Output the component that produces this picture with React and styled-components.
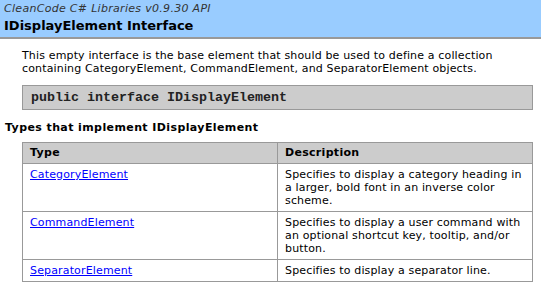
import React from 'react';
import styled, { createGlobalStyle } from 'styled-components';

const GlobalStyle = createGlobalStyle`
    body {
        margin: 0;
        background: #fff;
        font-family: "DejaVu Sans", Verdana, sans-serif;
        font-size: 11px;
        letter-spacing: 0.15px;
        color: #000;
    }
`

const rows = [
    { name: 'CategoryElement', desc: 'Specifies to display a category heading in a larger, bold font in an inverse color scheme.' },
    { name: 'CommandElement', desc: 'Specifies to display a user command with an optional shortcut key, tooltip, and/or button.' },
    { name: 'SeparatorElement', desc: 'Specifies to display a separator line.' },
]

const App = () => {
    return (
        <>
            <GlobalStyle />
            <Banner>
                <div className="product">CleanCode C# Libraries v0.9.30 API</div>
                <h1>IDisplayElement Interface</h1>
            </Banner>

            <Main>
                <Indent>
                    <p>This empty interface is the base element that should be used to define a collection containing CategoryElement, CommandElement, and SeparatorElement objects.</p>
                    <Code>public interface IDisplayElement</Code>
                </Indent>

                <Heading>Types that implement IDisplayElement</Heading>

                <Indent>
                    <Table>
                        <thead>
                            <tr>
                                <th>Type</th>
                                <th>Description</th>
                            </tr>
                        </thead>
                        <tbody>
                            {rows.map(r => (
                                <tr key={r.name}>
                                    <td><a href="#">{r.name}</a></td>
                                    <td>{r.desc}</td>
                                </tr>
                            ))}
                        </tbody>
                    </Table>
                </Indent>
            </Main>
        </>
    );
}

export default App;

const Banner = styled.div`
    background-color: #99ccff;
    border-bottom: 2px solid #999;
    padding: 1px 4px 2px;

    .product {
        font-style: italic;
        color: #333;
        line-height: 16px;
        letter-spacing: 0.3px;
    }
    h1 {
        margin: 0;
        font-size: 13px;
        font-weight: bold;
        line-height: 18px;
        letter-spacing: 0;
    }
`

const Main = styled.div`
    padding: 0 8px 0 5px;
`

const Indent = styled.div`
    margin-left: 17px;

    p {
        margin: 10px 0 0;
        line-height: 13px;
    }
`

const Code = styled.pre`
    margin: 10px 0 0;
    padding: 4px 8px;
    background-color: #ccc;
    border: 1px solid #999;
    font-family: "Courier New", "Liberation Mono", monospace;
    font-size: 13.33px;
    font-weight: bold;
    letter-spacing: 0;
    line-height: 15px;
    color: #222;
`

const Heading = styled.h4`
    margin: 11px 0 0;
    font-size: 11px;
    font-weight: bold;
    line-height: 14px;
    letter-spacing: 0.4px;
`

const Table = styled.table`
    margin-top: 7px;
    width: 100%;
    border-collapse: collapse;
    font-size: 11px;

    th, td {
        width: 50%;
        border: 1px solid #999;
        text-align: left;
        vertical-align: top;
        padding: 4px 7px;
        line-height: 13px;
    }
    th {
        background-color: #ccc;
        padding: 3px 7px 3px;
        line-height: 14px;
        letter-spacing: 0.3px;
    }
    a {
        color: #00f;
    }
`
